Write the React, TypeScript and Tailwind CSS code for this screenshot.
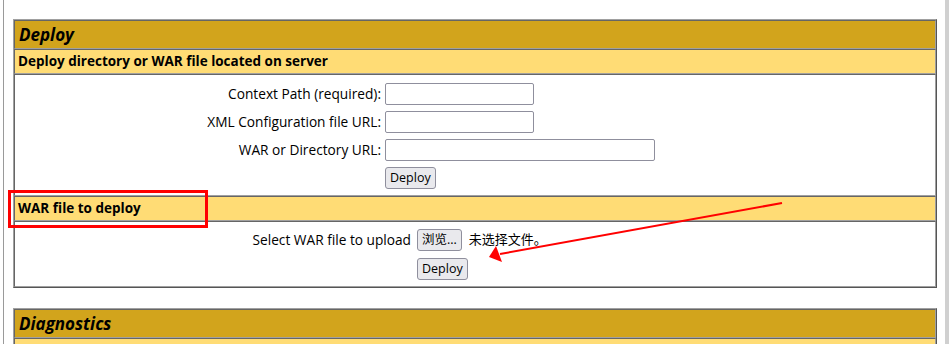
import React from 'react'

const FONT = "font-['Open_Sans','Noto_Sans_CJK_SC',sans-serif]"

function Btn({ children }: { children: React.ReactNode }) {
  return (
    <button
      type="button"
      className="h-[22px] px-[4px] rounded-[3px] border border-[#8f8f9d] bg-[#e9e9ed] text-[12.5px] leading-none text-black"
    >
      {children}
    </button>
  )
}

function Field({ w }: { w: string }) {
  return <input type="text" className={`${w} h-[22px] rounded-[2px] border border-[#8f8f9d] bg-white`} />
}

/** One bordered table cell row. */
function Row({ bg, className = '', children }: { bg: string; className?: string; children?: React.ReactNode }) {
  return (
    <div
      className={`border border-t-[#666] border-l-[#666] border-b-[#a0a0a0] border-r-[#a0a0a0] ${bg} ${className}`}
    >
      {children}
    </div>
  )
}

function Title({ text }: { text: string }) {
  return (
    <Row bg="bg-[#d2a41c]" className="h-[29px] flex items-center px-[4px]">
      <span className="text-[17px] font-bold italic text-black">{text}</span>
    </Row>
  )
}

function SubHeader({ text }: { text?: string }) {
  return (
    <Row bg="bg-[#ffdc75]" className="h-[25px] flex items-center px-[3px]">
      <span className="text-[13.5px] font-bold text-black">{text}</span>
    </Row>
  )
}

const SERVER_FIELDS = [
  { label: 'Context Path (required):', w: 'w-[149px]' },
  { label: 'XML Configuration file URL:', w: 'w-[149px]' },
  { label: 'WAR or Directory URL:', w: 'w-[270px]' },
]

export default function App() {
  return (
    <div className={`${FONT} relative h-[344px] w-[949px] overflow-hidden bg-white text-[13.7px] text-black flex`}>
      <div className="w-[3px]" />
      <div className="w-px bg-[#9a9a9a]" />
      <div className="flex-1 pl-[9px] pr-[8px] pt-[19px] flex flex-col gap-[20px]">
        {/* Deploy */}
        <div className="border border-[#a0a0a0] border-r-[#555] border-b-[#555]">
          <Title text="Deploy" />
          <SubHeader text="Deploy directory or WAR file located on server" />
          <Row bg="bg-white" className="h-[122px] pt-[5px]">
            {SERVER_FIELDS.map((f) => (
              <div key={f.label} className="h-[28px] grid grid-cols-[366px_1fr] gap-x-[4px] items-center">
                <span className="text-right">{f.label}</span>
                <Field w={f.w} />
              </div>
            ))}
            <div className="h-[28px] grid grid-cols-[366px_1fr] gap-x-[4px] items-center">
              <span />
              <div>
                <Btn>Deploy</Btn>
              </div>
            </div>
          </Row>
          <SubHeader text="WAR file to deploy" />
          <Row bg="bg-white" className="h-[66px] pt-[4px]">
            <div className="h-[28px] grid grid-cols-[396px_1fr] gap-x-[6px] items-center">
              <span className="text-right">Select WAR file to upload</span>
              <div className="flex items-center gap-[7px]">
                <Btn>浏览...</Btn>
                <span className="text-[13px]">未选择文件。</span>
              </div>
            </div>
            <div className="h-[30px] grid grid-cols-[396px_1fr] gap-x-[6px] items-center">
              <span />
              <div>
                <Btn>Deploy</Btn>
              </div>
            </div>
          </Row>
        </div>

        {/* Diagnostics */}
        <div className="border border-[#a0a0a0] border-r-[#555] border-b-[#555]">
          <Title text="Diagnostics" />
          <SubHeader />
        </div>
      </div>
      <div className="w-[4px] bg-[#d0d0d0]" />

      {/* annotation: highlight box + arrow */}
      <div className="absolute left-[8px] top-[190px] w-[200px] h-[38px] border-[3px] border-[#ff0000]" />
      <svg className="absolute left-0 top-0 pointer-events-none" width="949" height="344">
        <line x1="782" y1="203" x2="500" y2="254" stroke="#ff0000" strokeWidth="2" />
        <polygon points="489,257 502,262 496,246" fill="#ff0000" />
      </svg>
    </div>
  )
}
